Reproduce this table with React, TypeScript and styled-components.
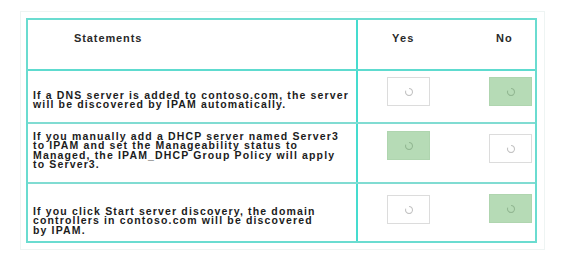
import React from "react";
import styled, { createGlobalStyle } from "styled-components";

const Global = createGlobalStyle`
  html, body { margin: 0; padding: 0; background: #ffffff; }
  body { font-family: "Liberation Sans", Arial, sans-serif; }
`;

const Page = styled.div`
  width: 574px;
  height: 261px;
  padding: 11px 0 0 20px;
  box-sizing: border-box;
`;

const Frame = styled.div`
  width: 525px;
  height: 239px;
  box-sizing: border-box;
  border: 1px solid #eef4f3;
  padding: 6px 0 0 5px;
`;

const Table = styled.div`
  width: 511px;
  height: 225px;
  box-sizing: border-box;
  border: 2px solid #6adcd0;
  display: grid;
  grid-template-rows: 51px 53px 60px 57px;
`;

const Row = styled.div<{ $last?: boolean; $line?: string }>`
  display: grid;
  grid-template-columns: 330px 1fr;
  border-bottom: ${(p) => (p.$last ? "none" : `2px solid ${p.$line ?? "#80dcd2"}`)};
`;

const HeadCell = styled.div`
  border-right: 2px solid #45dccf;
  padding: 12px 0 0 46px;
  font-size: 11px;
  font-weight: 700;
  letter-spacing: 0.9px;
  color: #2a2a2a;
`;

const HeadOptions = styled.div`
  display: flex;
  justify-content: space-between;
  padding: 12px 22px 0 34px;
  font-size: 11px;
  font-weight: 700;
  letter-spacing: 1.2px;
  color: #2a2a2a;
`;

const Statement = styled.div<{ $top: number }>`
  border-right: 2px solid #45dccf;
  padding: ${(p) => p.$top}px 0 0 5px;
  font-size: 10.5px;
  line-height: 9.4px;
  font-weight: 700;
  letter-spacing: 1.15px;
  color: #1c1c1c;
  white-space: nowrap;
`;

const Options = styled.div`
  display: flex;
  justify-content: space-between;
  align-items: flex-start;
  padding: 0 3px 0 29px;
`;

const Choice = styled.div<{ $on?: boolean; $top: number }>`
  width: 43px;
  height: 29px;
  box-sizing: border-box;
  margin-top: ${(p) => p.$top}px;
  background: ${(p) => (p.$on ? "#b6dbb6" : "#ffffff")};
  border: 1px solid ${(p) => (p.$on ? "#afd5af" : "#dcdcdc")};
  display: flex;
  align-items: center;
  justify-content: center;
`;

const Ring = ({ on }: { on?: boolean }) => (
  <svg width="10" height="10" viewBox="0 0 10 10">
    <path
      d="M5 1.5 A3.5 3.5 0 1 1 1.8 3.6"
      fill="none"
      stroke={on ? "#93b893" : "#c4c4c4"}
      strokeWidth="1.1"
    />
  </svg>
);

type Item = {
  text: React.ReactNode;
  yes: boolean;
  top: number;
  yesTop: number;
  noTop: number;
};

const items: Item[] = [
  {
    text: (
      <>
        If a DNS server is added to contoso.com, the server
        <br />
        will be discovered by IPAM automatically.
      </>
    ),
    yes: false,
    top: 20,
    yesTop: 6,
    noTop: 6,
  },
  {
    text: (
      <>
        If you manually add a DHCP server named Server3
        <br />
        to IPAM and set the Manageability status to
        <br />
        Managed, the IPAM_DHCP Group Policy will apply
        <br />
        to Server3.
      </>
    ),
    yes: true,
    top: 8,
    yesTop: 7,
    noTop: 10,
  },
  {
    text: (
      <>
        If you click Start server discovery, the domain
        <br />
        controllers in contoso.com will be discovered
        <br />
        by IPAM.
      </>
    ),
    yes: false,
    top: 23,
    yesTop: 11,
    noTop: 10,
  },
];

export default function App() {
  return (
    <>
      <Global />
      <Page>
        <Frame>
          <Table>
            <Row $line="#5edbcf">
              <HeadCell>Statements</HeadCell>
              <HeadOptions>
                <span>Yes</span>
                <span>No</span>
              </HeadOptions>
            </Row>
            {items.map((it, i) => (
              <Row key={i} $last={i === items.length - 1}>
                <Statement $top={it.top}>{it.text}</Statement>
                <Options>
                  <Choice $on={it.yes} $top={it.yesTop}>
                    <Ring on={it.yes} />
                  </Choice>
                  <Choice $on={!it.yes} $top={it.noTop}>
                    <Ring on={!it.yes} />
                  </Choice>
                </Options>
              </Row>
            ))}
          </Table>
        </Frame>
      </Page>
    </>
  );
}
